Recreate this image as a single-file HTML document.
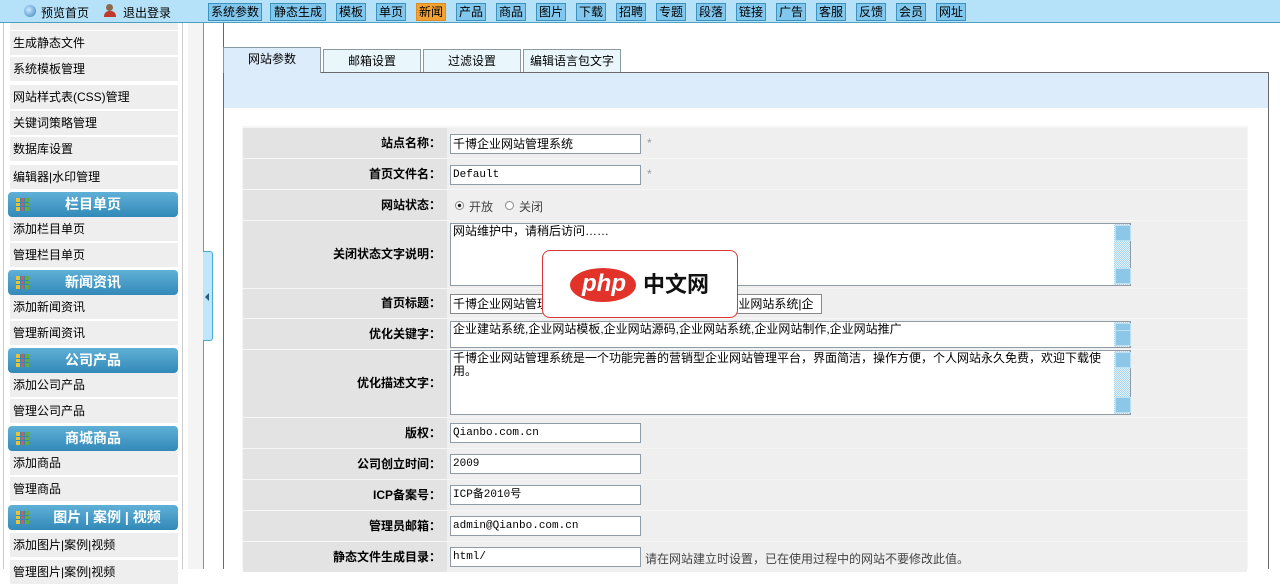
<!DOCTYPE html>
<html><head><meta charset="utf-8"><style>
*{margin:0;padding:0;box-sizing:border-box}
body{width:1280px;height:569px;overflow:hidden;background:#fff;font-family:"Liberation Sans","Noto Sans CJK SC","WenQuanYi Zen Hei",sans-serif;font-size:12px;color:#000;position:relative}
.a{position:absolute}
#top{left:0;top:0;width:1280px;height:23px;background:#b5e2f9;border-bottom:1px solid #4d9fbf}
.nb{position:absolute;top:3px;height:18px;background:#82c7ee;border:1px solid #3b93bd;font-size:12px;line-height:16px;text-align:center;color:#000}
.nb.on{background:#f2a233;border-color:#e08a20}
.si{position:absolute;left:10px;width:168px;height:24px;background:#eeeeee;line-height:24px;padding-left:3px;font-size:12px}
.sh{position:absolute;left:8px;width:170px;height:25px;border-radius:4px;background:linear-gradient(#5fb0d6,#3289b8);color:#fff;font-weight:bold;font-size:14px;line-height:25px}
.sh i{position:absolute;left:8px;top:6px;width:13px;height:13px;background:
linear-gradient(90deg,transparent 4px,#3289b8 4px,#3289b8 5px,transparent 5px,transparent 8px,#3289b8 8px,#3289b8 9px,transparent 9px),
linear-gradient(transparent 4px,#3289b8 4px,#3289b8 5px,transparent 5px,transparent 8px,#3289b8 8px,#3289b8 9px,transparent 9px),
linear-gradient(90deg,#e7c23b 33%,#d55 33%,#d55 66%,#6a4 66%)}
.sh span{position:absolute;left:0;width:170px;text-align:center}
.tab{position:absolute;top:49px;height:23px;border:1px solid #8a9aa5;border-bottom:none;background:#e9f7fd;text-align:center;line-height:22px;font-size:12px}
.row{position:absolute;left:243px;width:1004px;background:#efefef}
.row .l{position:absolute;left:0;top:0;bottom:0;width:204px;background:#e3e3e3;text-align:right;padding-right:6px;font-weight:bold;font-size:12px}
.inp{position:absolute;left:207px;height:20px;border:1px solid #8f9ca8;background:#fff;font-family:"Liberation Mono","Noto Sans CJK SC",monospace;font-size:11px;line-height:18px;padding-left:2px;width:191px}
.ta{position:absolute;left:207px;width:681px;border:1px solid #8f9ca8;background:#fff;font-size:12px;line-height:13px;padding:1px 2px}
.sb{position:absolute;right:0;top:0;bottom:0;width:16px;background:repeating-conic-gradient(#a6d6ee 0 25%,#e4f3fb 0 50%) 0 0/2px 2px}
.sb:before,.sb:after{content:"";position:absolute;left:1px;width:14px;height:14px;background:#8dc7e8;border:1px solid #bfe0f2}
.sb:before{top:1px}.sb:after{bottom:1px}
</style></head><body>
<div id="top" class="a">
<div class="a" style="left:24px;top:5px;width:12px;height:12px;border-radius:50%;background:radial-gradient(circle at 40% 40%,#cfeaff,#2f7fc0);"></div>
<div class="a" style="left:41px;top:4px;font-size:12px">预览首页</div>
<div class="a" style="left:104px;top:4px;width:12px;height:13px;"><div style="width:7px;height:7px;border-radius:50%;background:#8a6a4a;margin-left:2px"></div><div style="width:12px;height:6px;background:#c0392b;border-radius:5px 5px 0 0"></div></div>
<div class="a" style="left:123px;top:4px;font-size:12px">退出登录</div>
<div class="nb" style="left:208px;width:54px">系统参数</div>
<div class="nb" style="left:270px;width:56px">静态生成</div>
<div class="nb" style="left:336px;width:30px">模板</div>
<div class="nb" style="left:376px;width:30px">单页</div>
<div class="nb on" style="left:416px;width:30px">新闻</div>
<div class="nb" style="left:456px;width:30px">产品</div>
<div class="nb" style="left:496px;width:30px">商品</div>
<div class="nb" style="left:536px;width:30px">图片</div>
<div class="nb" style="left:576px;width:30px">下载</div>
<div class="nb" style="left:616px;width:30px">招聘</div>
<div class="nb" style="left:656px;width:30px">专题</div>
<div class="nb" style="left:696px;width:30px">段落</div>
<div class="nb" style="left:736px;width:30px">链接</div>
<div class="nb" style="left:776px;width:30px">广告</div>
<div class="nb" style="left:816px;width:30px">客服</div>
<div class="nb" style="left:856px;width:30px">反馈</div>
<div class="nb" style="left:896px;width:30px">会员</div>
<div class="nb" style="left:936px;width:30px">网址</div>
</div>
<!-- sidebar -->
<div class="a" style="left:3px;top:23px;width:1px;height:546px;background:#ccc"></div>
<div class="a" style="left:182px;top:23px;width:1px;height:546px;background:#ccc"></div>
<div class="a" style="left:10px;top:23px;width:168px;height:7px;background:#eee"></div>
<div class="si" style="top:31px">生成静态文件</div>
<div class="si" style="top:57px">系统模板管理</div>
<div class="si" style="top:85px">网站样式表(CSS)管理</div>
<div class="si" style="top:111px">关键词策略管理</div>
<div class="si" style="top:137px">数据库设置</div>
<div class="si" style="top:165px">编辑器|水印管理</div>
<div class="sh" style="top:192px"><i></i><span>栏目单页</span></div>
<div class="si" style="top:217px">添加栏目单页</div>
<div class="si" style="top:243px">管理栏目单页</div>
<div class="sh" style="top:270px"><i></i><span>新闻资讯</span></div>
<div class="si" style="top:295px">添加新闻资讯</div>
<div class="si" style="top:321px">管理新闻资讯</div>
<div class="sh" style="top:348px"><i></i><span>公司产品</span></div>
<div class="si" style="top:373px">添加公司产品</div>
<div class="si" style="top:399px">管理公司产品</div>
<div class="sh" style="top:426px"><i></i><span>商城商品</span></div>
<div class="si" style="top:451px">添加商品</div>
<div class="si" style="top:477px">管理商品</div>
<div class="sh" style="top:505px"><i></i><span style="left:14px">图片 | 案例 | 视频</span></div>
<div class="si" style="top:533px">添加图片|案例|视频</div>
<div class="si" style="top:560px">管理图片|案例|视频</div>
<!-- splitter -->
<div class="a" style="left:188px;top:23px;width:15px;height:546px;background:#f4f4f4"></div>
<div class="a" style="left:203px;top:23px;width:1px;height:546px;background:#4aa8cf"></div>
<div class="a" style="left:203px;top:251px;width:10px;height:90px;background:#bfe6fa;border:1px solid #4aa8cf;border-left:none;border-radius:0 3px 3px 0"></div>
<div class="a" style="left:205px;top:293px;width:0;height:0;border-top:4px solid transparent;border-bottom:4px solid transparent;border-right:4px solid #2a5a7a"></div>
<div class="a" style="left:223px;top:23px;width:1px;height:546px;background:#666"></div>
<!-- tabs -->
<div class="tab" style="left:223px;width:98px;top:47px;height:26px;background:#dcecfa;border-bottom:none;line-height:22px;z-index:2">网站参数</div>
<div class="tab" style="left:323px;width:98px">邮箱设置</div>
<div class="tab" style="left:423px;width:98px">过滤设置</div>
<div class="tab" style="left:523px;width:98px">编辑语言包文字</div>
<div class="a" style="left:223px;top:72px;width:1046px;height:497px;border:1px solid #6a6a6a;border-bottom:none"></div>
<div class="a" style="left:224px;top:73px;width:1044px;height:35px;background:#dcecfa"></div>
<div class="a" style="left:242px;top:126px;width:1006px;height:443px;background:#f6f6f6"></div>
<!-- rows -->
<div class="row" style="top:128px;height:30px"><div class="l" style="line-height:30px">站点名称：</div><div class="inp" style="top:6px;font-family:'Liberation Sans','Noto Sans CJK SC',sans-serif;font-size:12px">千博企业网站管理系统</div><div class="a" style="left:404px;top:8px;color:#999">*</div></div>
<div class="row" style="top:159px;height:30px"><div class="l" style="line-height:30px">首页文件名：</div><div class="inp" style="top:6px">Default</div><div class="a" style="left:404px;top:8px;color:#999">*</div></div>
<div class="row" style="top:190px;height:30px"><div class="l" style="line-height:30px">网站状态：</div>
<div class="a" style="left:212px;top:11px;width:9px;height:9px;border:1px solid #888;border-radius:50%;background:radial-gradient(#222 30%,#fff 40%)"></div><div class="a" style="left:226px;top:8px;color:#444">开放</div>
<div class="a" style="left:262px;top:11px;width:9px;height:9px;border:1px solid #888;border-radius:50%;background:#fff"></div><div class="a" style="left:276px;top:8px;color:#444">关闭</div></div>
<div class="row" style="top:221px;height:67px"><div class="l" style="line-height:67px">关闭状态文字说明：</div><div class="ta" style="top:2px;height:63px">网站维护中，请稍后访问……<div class="sb"></div></div></div>
<div class="row" style="top:289px;height:29px"><div class="l" style="line-height:29px">首页标题：</div><div class="ta" style="top:5px;height:20px;width:372px;border-color:#888;line-height:16px;white-space:nowrap;overflow:hidden">千博企业网站管理系统|企业网站建设|企业网站模板|企业网站系统|企</div></div>
<div class="row" style="top:319px;height:30px"><div class="l" style="line-height:30px">优化关键字：</div><div class="ta" style="top:2px;height:27px">企业建站系统,企业网站模板,企业网站源码,企业网站系统,企业网站制作,企业网站推广<div class="sb"></div></div></div>
<div class="row" style="top:350px;height:67px"><div class="l" style="line-height:67px">优化描述文字：</div><div class="ta" style="top:0px;height:65px;padding-right:20px">千博企业网站管理系统是一个功能完善的营销型企业网站管理平台，界面简洁，操作方便，个人网站永久免费，欢迎下载使用。<div class="sb"></div></div></div>
<div class="row" style="top:418px;height:30px"><div class="l" style="line-height:30px">版权：</div><div class="inp" style="top:5px">Qianbo.com.cn</div></div>
<div class="row" style="top:449px;height:30px"><div class="l" style="line-height:30px">公司创立时间：</div><div class="inp" style="top:5px">2009</div></div>
<div class="row" style="top:480px;height:30px"><div class="l" style="line-height:30px">ICP备案号：</div><div class="inp" style="top:5px">ICP备2010号</div></div>
<div class="row" style="top:511px;height:30px"><div class="l" style="line-height:30px">管理员邮箱：</div><div class="inp" style="top:5px">admin@Qianbo.com.cn</div></div>
<div class="row" style="top:542px;height:30px"><div class="l" style="line-height:30px">静态文件生成目录：</div><div class="inp" style="top:5px">html/</div><div class="a" style="left:402px;top:8px;color:#444">请在网站建立时设置，已在使用过程中的网站不要修改此值。</div></div>
<!-- watermark -->
<div class="a" style="left:542px;top:250px;width:196px;height:68px;background:#fff;border:1px solid #d33;border-radius:8px">
<div class="a" style="left:27px;top:17px;width:66px;height:34px;border-radius:50%;background:#e2332b"></div>
<div class="a" style="left:31px;top:17px;width:60px;text-align:center;color:#fff;font-weight:bold;font-style:italic;font-size:24px;line-height:32px;font-family:'Liberation Sans',sans-serif">php</div>
<div class="a" style="left:100px;top:21px;font-size:22px;font-weight:bold;line-height:26px;color:#111">中文网</div>
</div>
</body></html>
